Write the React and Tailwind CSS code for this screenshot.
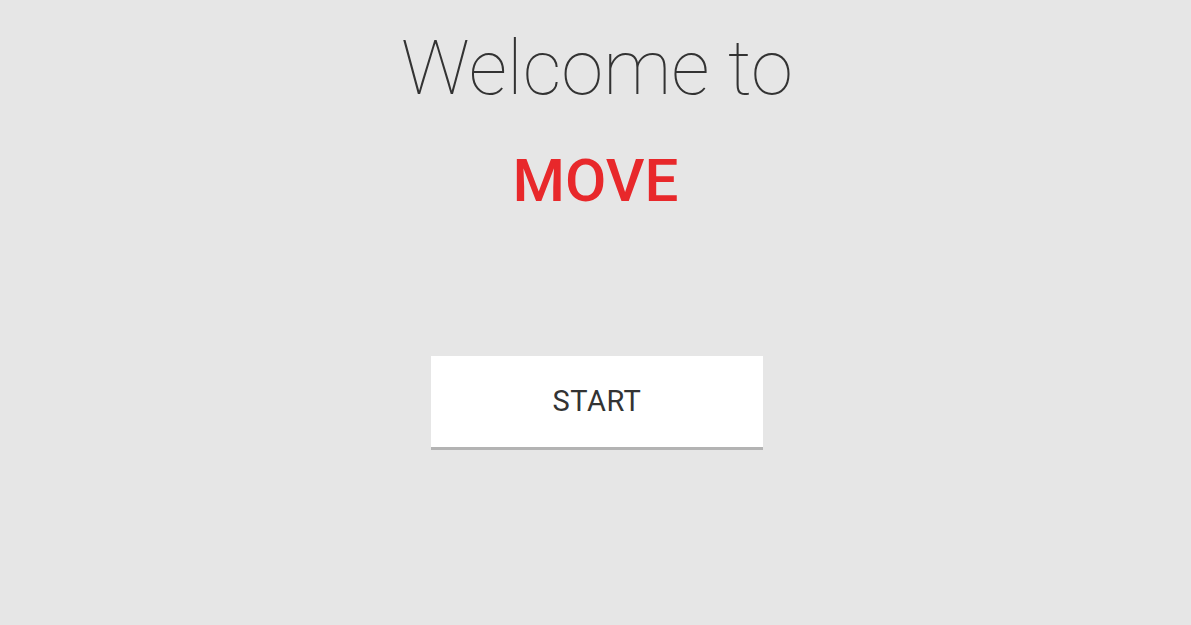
export default function App() {
  return (
    <div className="w-[1191px] h-[625px] bg-[#e6e6e6] flex flex-col items-center font-['Roboto','Liberation_Sans',sans-serif]">
      <h1 className="mt-[30px] ml-[3px] text-[76px] leading-none font-thin text-[#333333]">Welcome to</h1>
      <h2 className="mt-[45px] text-[60px] leading-none font-medium text-[#e8282b]">MOVE</h2>
      <button className="mt-[145px] ml-[3px] w-[332px] h-[94px] bg-white border-b-[3px] border-[#b3b3b3] text-[29px] tracking-[0.5px] text-[#333333] flex items-center justify-center">
        START
      </button>
    </div>
  );
}
